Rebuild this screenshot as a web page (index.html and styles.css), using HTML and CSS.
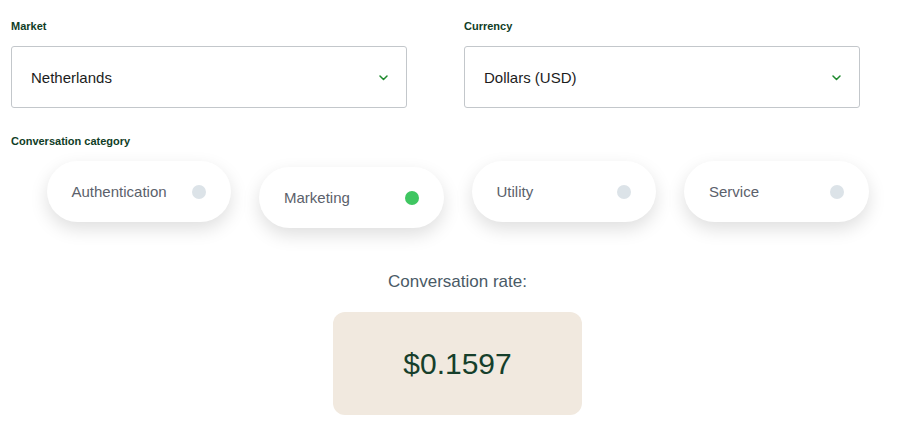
FILE: index.html
```html
<!DOCTYPE html>
<html lang="en">
<head>
    <meta charset="UTF-8">
    <meta name="viewport" content="width=device-width, initial-scale=1.0">
    <title>Conversation Rate</title>
    <link rel="stylesheet" href="styles.css">
</head>
<body>
    <div class="calculator">
        <div class="fields">
            <div class="field">
                <label class="field-label">Market</label>
                <div class="select">
                    <span>Netherlands</span>
                    <svg class="chevron" width="9" height="6" viewBox="0 0 9 6"><path d="M1 1l3.5 3.5L8 1" fill="none" stroke="#1f8a2e" stroke-width="1.5" stroke-linecap="round" stroke-linejoin="round"/></svg>
                </div>
            </div>
            <div class="field">
                <label class="field-label">Currency</label>
                <div class="select">
                    <span>Dollars (USD)</span>
                    <svg class="chevron" width="9" height="6" viewBox="0 0 9 6"><path d="M1 1l3.5 3.5L8 1" fill="none" stroke="#1f8a2e" stroke-width="1.5" stroke-linecap="round" stroke-linejoin="round"/></svg>
                </div>
            </div>
        </div>

        <label class="field-label">Conversation category</label>
        <div class="categories">
            <div class="pill">Authentication <span class="dot"></span></div>
            <div class="pill active">Marketing <span class="dot"></span></div>
            <div class="pill">Utility <span class="dot"></span></div>
            <div class="pill">Service <span class="dot"></span></div>
        </div>

        <div class="result">
            <p class="result-title">Conversation rate:</p>
            <div class="result-box">$0.1597</div>
        </div>
    </div>
</body>
</html>
```

FILE: styles.css
```css
body {
    font-family: "Liberation Sans", Arial, sans-serif;
    background-color: #fff;
    margin: 0;
    padding: 19px 0 0 11px;
}

.calculator {
    width: 893px;
}

.fields {
    display: grid;
    grid-template-columns: 396px 396px;
    column-gap: 57px;
}

.field-label {
    display: block;
    font-size: 11px;
    line-height: 14px;
    font-weight: bold;
    color: #0f3d26;
    margin-bottom: 13px;
}

.select {
    display: flex;
    align-items: center;
    justify-content: space-between;
    height: 62px;
    box-sizing: border-box;
    padding: 0 18px 0 19px;
    border: 1px solid #c3c7cb;
    border-radius: 3px;
    font-size: 15px;
    color: #1c1c1c;
    margin-bottom: 26px;
}

.chevron {
    margin-top: 2px;
}

.categories {
    display: flex;
    justify-content: center;
    align-items: flex-start;
    gap: 28px;
}

.pill {
    width: 184.5px;
    height: 61px;
    box-sizing: border-box;
    padding: 0 25px;
    border-radius: 31px;
    background-color: #fff;
    box-shadow: 0 7px 18px rgba(0, 0, 0, 0.13);
    display: flex;
    align-items: center;
    justify-content: space-between;
    font-size: 15px;
    color: #5b616b;
}

.pill.active {
    margin-top: 6px;
}

.dot {
    width: 14px;
    height: 14px;
    border-radius: 50%;
    background-color: #dce3e8;
}

.pill.active .dot {
    background-color: #3fc661;
}

.result {
    display: flex;
    flex-direction: column;
    align-items: center;
    margin-top: 44px;
}

.result-title {
    margin: 0 0 20px;
    font-size: 17px;
    line-height: 20px;
    color: #4a5a66;
}

.result-box {
    width: 249px;
    height: 103px;
    border-radius: 12px;
    background-color: #f1e9df;
    display: flex;
    align-items: center;
    justify-content: center;
    font-size: 30px;
    color: #163f2b;
}
```
